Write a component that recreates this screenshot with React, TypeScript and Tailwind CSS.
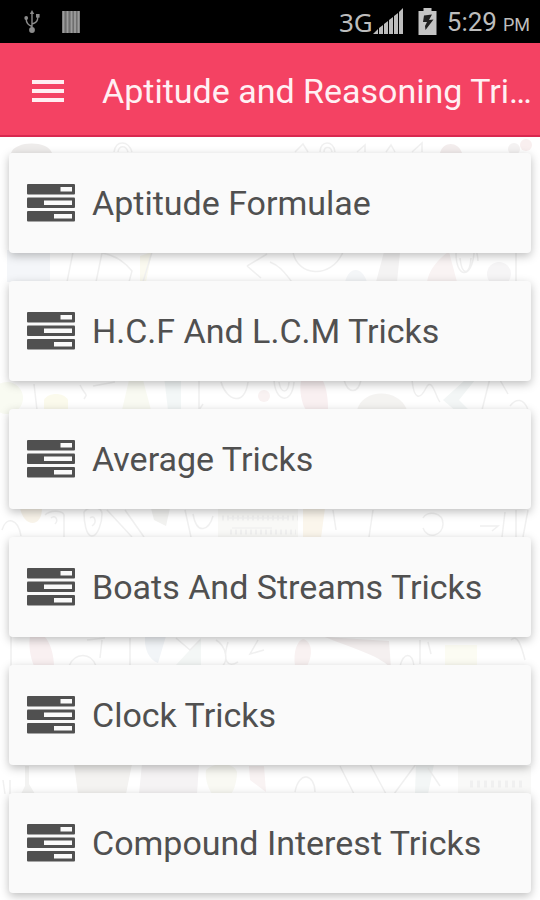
const topics = [
  'Aptitude Formulae',
  'H.C.F And L.C.M Tricks',
  'Average Tricks',
  'Boats And Streams Tricks',
  'Clock Tricks',
  'Compound Interest Tricks',
];

function UsbIcon() {
  return (
    <svg viewBox="0 0 16 24" className="h-6 w-4" fill="none" stroke="#8c8c8c" strokeWidth="1.4" aria-hidden="true">
      <path d="M8 3v17M8 16.500C3.500 15 2.200 13 2.200 9M8 14c4.500-1.500 5.800-3 5.800-7" />
      <path d="M8 0l2.200 4H5.800z" fill="#8c8c8c" stroke="none" />
      <circle cx="8" cy="20" r="2.900" fill="#8c8c8c" stroke="none" />
      <circle cx="2.200" cy="8" r="1.900" fill="#8c8c8c" stroke="none" />
      <rect x="12" y="4" width="3.600" height="3.600" fill="#8c8c8c" stroke="none" />
    </svg>
  );
}

function BarsIcon() {
  return (
    <svg viewBox="0 0 18 22" className="h-[22px] w-[18px]" aria-hidden="true">
      <rect width="18" height="22" fill="#6e6e6e" />
      <path d="M1.500 0v22M5.500 0v22M9.500 0v22M13 0v22M16.500 0v22" stroke="#9c9c9c" strokeWidth="1.800" />
    </svg>
  );
}

function SignalIcon() {
  return (
    <svg viewBox="0 0 31 27" className="h-[27px] w-[31px]" fill="#bdbdbd" aria-hidden="true">
      <path d="M0 26l5-5v5zM6 20l4-3v9H6zM11 16l4-3v13h-4zM16 12l4-3v17h-4zM21 8l4-3v21h-4zM26 4l4-4v26h-4z" />
    </svg>
  );
}

function BatteryIcon() {
  return (
    <svg viewBox="0 0 19 27" className="h-[27px] w-[19px]" aria-hidden="true">
      <path d="M5.500 0h8v3H18.500v24H.5V3h5z" fill="#c4c4c4" />
      <path d="M6 7.500l8-1-3 5.500 4.500-.5L7.500 22l-.5-4 2-4H5z" fill="#1f1f1f" />
    </svg>
  );
}

function TasksIcon() {
  return (
    <svg viewBox="0 0 48 38" className="h-[38px] w-12 shrink-0" aria-hidden="true">
      <g fill="#505050">
        <rect y="0" width="48" height="10.500" rx="1" />
        <rect y="13.500" width="48" height="10.500" rx="1" />
        <rect y="27" width="48" height="10.500" rx="1" />
      </g>
      <g fill="#fafafa">
        <rect x="33.500" y="3" width="11.500" height="4.500" />
        <rect x="17" y="16.500" width="28" height="4.500" />
        <rect x="27" y="30" width="18" height="4.500" />
      </g>
    </svg>
  );
}

// Faint stationery doodles that show between the cards
function Doodles() {
  return (
    <svg
      viewBox="0 137 540 763"
      preserveAspectRatio="xMidYMin slice"
      className="absolute inset-0 -z-10 h-full w-full opacity-75"
      fill="none"
      stroke="#ececec"
      strokeWidth="1.5"
      aria-hidden="true"
    >
      <g stroke="none">
        <path d="M11 153c4-12 36-13 41 0z" fill="#e9e6e5" />
        <path d="M440 153c3-12 18-12 22 0z" fill="#f0e8e8" />
        <circle cx="526" cy="145" r="6" fill="#f8eaea" />
        <circle cx="514" cy="149" r="6" fill="#f1eeee" />
        <path d="M7 250h43v32H7z" fill="#f1f4f8" />
        <path d="M140 256l12-4-6 30h-6z" fill="#faf9ec" />
        <path d="M376 282l8-30h16l-3 30z" fill="#f1eff0" />
        <path d="M427 282c2-16 20-30 22-30l8 30z" fill="#f8efef" />
        <path d="M345 282c4-16 17-16 22 0z" fill="#f1f3f6" />
        <circle cx="499" cy="274" r="12" fill="#f3f2f4" />
        <circle cx="7" cy="398" r="16" fill="#f8faee" />
        <path d="M44 410v-10c4-8 20-8 24 0v10z" fill="#faf9e6" />
        <path d="M122 410l7-30h14l8 30z" fill="#f8f9ee" />
        <path d="M164 376h17v34h-13z" fill="#f0f5f5" />
        <path d="M302 376c-4 14 0 28 4 34h22c0-14-2-26-8-34z" fill="#f8ebed" />
        <path d="M357 410c6-22 42-22 50 0z" fill="#f1efed" />
        <path d="M443 400l22-20h10l-16 20 12 12h-14z" fill="#eff4f3" />
        <circle cx="264" cy="396" r="6" fill="#f8eeee" />
        <path d="M20 508h22c0 20-18 20-22 0z" fill="#f7f1e4" />
        <path d="M151 508h19l-4 18-12-6z" fill="#eeeeec" />
        <path d="M218 508h80v30h-80z" fill="#f8f8f5" />
        <path d="M303 508h22l-4 30h-18z" fill="#faf4e6" />
        <path d="M30 636c-2 14 2 26 5 32h19c0-14-4-26-10-32z" fill="#f7ebed" />
        <path d="M145 636h21l-8 27c-9-3-14-14-13-27z" fill="#eef2f6" />
        <path d="M175 666l26-28v28z" fill="#f1f5f3" />
        <path d="M295 666c-2-14 2-25 8-27 8 2 11 14 4 27z" fill="#f8eeee" />
        <path d="M325 637l64 4 2 27c-14-14-40-20-66-31z" fill="#f2ecec" />
        <path d="M445 645h32v26h-32z" fill="#fbfbf0" />
        <path d="M25 766h4v18l6 10H21l4-8z" fill="#f0f0ee" />
        <path d="M74 764h58l-6 30H78z" fill="#f1efed" />
        <path d="M142 764h57l-2 30h-58z" fill="#f2eff1" />
        <path d="M206 770c8-8 28-8 31 2 0 10-4 22-7 22h-18c-5-8-7-16-6-24z" fill="#f7f8f0" />
        <path d="M249 766h15l2 26-16-12z" fill="#f8eff0" />
        <path d="M416 764h18l-6 30h-13z" fill="#eff4f3" />
        <path d="M458 766h73v28h-73z" fill="#f8f8f6" />
      </g>
      <path d="M114 152c2-12 14-12 18 0M118 152c1-7 8-7 10 0M320 152c0-12 14-12 15 0M324 152c0-6 7-6 8 0M295 152l8-8 5 8M357 152l8-7v7M386 152l5-7 4 7M412 152l10-9v9" />
      <path d="M73 252l-6 30M102 253l-6 29M102 253c12 2 22 8 30 18l-3 11M152 252l-9 30M247 266l20-12M247 266l14 12M293 252c4 24 38 28 50 0M270 262c10 4 14 10 22 20M456 253c0 26 16 26 18 0 0-4 3-6 4 8M460 258c2 18 10 18 11 0M516 252v30" />
      <path d="M34 384l3 26M80 385c6 12 8 8 4 14M93 386l22-4M199 380v30l4-6M221 382c6 20 24 24 27 0M274 378c0 24 18 28 20 4M279 382c2 12 9 12 10 0M344 380c4 14 14 14 17 0M412 380c2 20 8 20 14 8s10 10 14 14M490 378l-8 32M500 380l8 14M510 406c6-8 14-8 18 4" />
      <path d="M2 530c4-14 16-12 19 6M45 515c6-6 18-4 19 0v22M84 512c4-6 18-6 18 2s-4 22-10 22-8-14-8-24M107 510l25 27M125 510l19 27M185 510l6 27M193 514c4 22 16 16 20 2M232 528h40M228 518h60M333 510l3 20M373 510l-4 27M423 518c4-8 20-6 20 6s-16 16-20 4M480 526h18l-6 5M505 512l-3 25M516 510v27M528 510l-5 27" />
      <path d="M51 518c4-4 8 2 4 6M90 518c4-4 8 4 2 8" />
      <path d="M11 636v32M69 666c6-14 22-14 27 0M87 640l18-2M102 640l-2 18M130 638v30M176 638l14 12 10-10M216 640c10 6 14 22 4 28M228 642c-6 20 0 26 10 20M258 640l-8 14 14-4M400 666c4-14 12-14 14 0M420 640v24M428 642l3 12M511 640c6-6 10 4 14 20" />
      <path d="M295 792c4-22 20-18 20 0M340 766l14 28M370 764l16 30M416 764l-22 30M428 768l12 18M10 780v14M3 780l2 14" />
      <path d="M470 784h56" strokeDasharray="3 4" strokeWidth="7" />
      <path d="M230 532h66M222 518h76" strokeDasharray="2 3" strokeWidth="5" />
    </svg>
  );
}

export default function App() {
  return (
    <div className="flex min-h-screen flex-col bg-white font-['Roboto',sans-serif]">
      <div className="flex h-[43px] items-center justify-between bg-black pl-6 pr-2.5">
        <div className="flex items-center gap-[22px]">
          <UsbIcon />
          <BarsIcon />
        </div>
        <div className="flex items-center text-[#bdbdbd]">
          <span className="font-['Noto_Sans',sans-serif] text-[26px] leading-8">3G</span>
          <SignalIcon />
          <span className="ml-3.5">
            <BatteryIcon />
          </span>
          <span className="ml-2.5 flex items-baseline gap-1.5 pt-1">
            <span className="text-[26px] leading-8">5:29</span>
            <span className="text-[18px] leading-8">PM</span>
          </span>
        </div>
      </div>

      <header className="flex h-[94px] items-center gap-[38px] border-b-2 border-[#d8284f] bg-[#f44263] pt-1 pl-8 pr-1">
        <button type="button" aria-label="Open menu" className="flex shrink-0 flex-col gap-[5px]">
          <span className="h-1 w-8 bg-[#ffeef1]" />
          <span className="h-1 w-8 bg-[#ffeef1]" />
          <span className="h-1 w-8 bg-[#ffeef1]" />
        </button>
        <h1 className="whitespace-nowrap text-[34px] leading-10 text-[#fff0f3]">Aptitude and Reasoning Tri…</h1>
      </header>

      <main className="relative isolate flex-1 px-[9px] pt-4 pb-[7px]">
        <Doodles />
        <ul className="flex flex-col gap-7">
          {topics.map((topic) => (
            <li key={topic}>
              <button
                type="button"
                className="flex h-[100px] w-full items-center gap-[17px] rounded-sm bg-[#fafafa] px-[18px] text-left shadow-[0_3px_10px_rgba(0,0,0,0.26)]"
              >
                <TasksIcon />
                <span className="text-[34px] leading-10 text-[#505050]">{topic}</span>
              </button>
            </li>
          ))}
        </ul>
      </main>
    </div>
  );
}
